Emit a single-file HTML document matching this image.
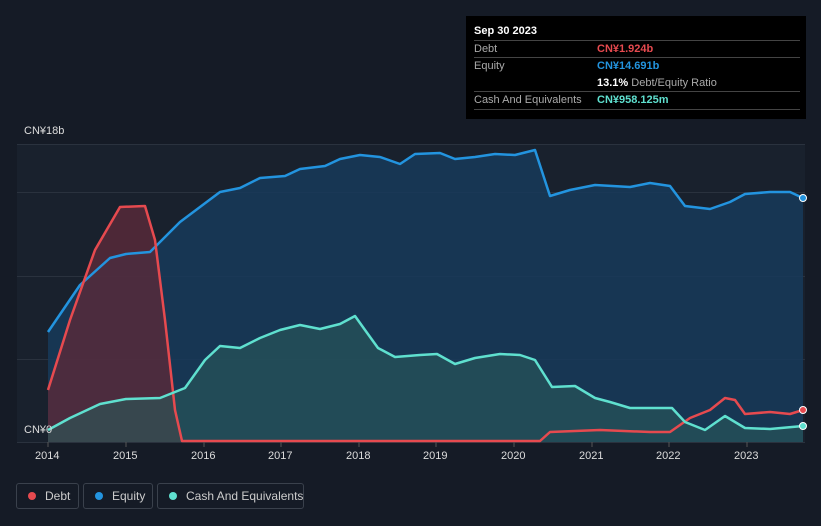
<!DOCTYPE html>
<html><head><meta charset="utf-8"><style>
body{margin:0;width:821px;height:526px;background:#151b26;font-family:"Liberation Sans",sans-serif;overflow:hidden;position:relative}
.tt{position:absolute;left:466px;top:16px;width:340px;height:103px;background:#000;color:#fff;font-size:11px}
.row{position:absolute;left:8px;width:326px;border-top:1px solid #444;height:17px;line-height:17px}
.lbl{color:#aaa;position:absolute;left:0}
.val{position:absolute;left:123px;font-weight:bold}
.leg{position:absolute;top:483px;height:26px;border:1px solid #3a414c;border-radius:3px;color:#ccc;font-size:12px;line-height:24px;box-sizing:border-box;white-space:nowrap}
.dot{display:inline-block;width:8px;height:8px;border-radius:50%;margin:0 9px 0 11px;vertical-align:0px}
.ax{position:absolute;top:450px;color:#ddd;font-size:11px}
</style></head><body>
<svg width="821" height="526" style="position:absolute;left:0;top:0">
<rect x="17" y="144" width="788" height="298" fill="#19212d"/>
<g stroke="#2a323e" stroke-width="1"><line x1="17" y1="144.5" x2="805" y2="144.5"/><line x1="17" y1="192.5" x2="805" y2="192.5"/><line x1="17" y1="276.5" x2="805" y2="276.5"/><line x1="17" y1="359.5" x2="805" y2="359.5"/><line x1="17" y1="442.5" x2="805" y2="442.5"/></g>
<polygon fill="#173a5a" fill-opacity="0.85" points="48,442 48,332 80,285 110,258 126,254 150,252 180,222 220,192 240,188 260,178 285,176 300,169 325,166 340,159 360,155 380,157 400,164 415,154 440,153 455,159 475,157 495,154 515,155 535,150 550,196 570,190 595,185 630,187 650,183 670,186 685,206 710,209 730,202 745,194 770,192 790,192 803,198 803,442"/>
<polygon fill="#5a2a3a" fill-opacity="0.8" points="48,442 48,390 70,320 95,250 120,207 145,206 155,240 165,320 175,410 182,440 182,442"/>
<polygon fill="#2a5a5a" fill-opacity="0.6" points="48,442 48,430 70,418 100,404 126,399 160,398 185,388 205,360 220,346 240,348 260,338 280,330 300,325 320,329 340,324 355,316 365,330 378,348 395,357 420,355 437,354 455,364 475,358 500,354 520,355 535,360 552,387 575,386 595,398 610,402 630,408 655,408 672,408 685,422 705,430 725,416 745,428 770,429 803,426 803,442"/>
<polyline fill="none" stroke="#2394df" stroke-width="2.5" stroke-linejoin="round" points="48,332 80,285 110,258 126,254 150,252 180,222 220,192 240,188 260,178 285,176 300,169 325,166 340,159 360,155 380,157 400,164 415,154 440,153 455,159 475,157 495,154 515,155 535,150 550,196 570,190 595,185 630,187 650,183 670,186 685,206 710,209 730,202 745,194 770,192 790,192 803,198"/>
<polyline fill="none" stroke="#e64a4f" stroke-width="2.5" stroke-linejoin="round" points="48,390 70,320 95,250 120,207 145,206 155,240 165,320 175,410 182,441 540,441 550,432 600,430 650,432 670,432 690,418 710,410 725,398 735,400 745,414 770,412 790,414 803,410"/>
<polyline fill="none" stroke="#5fe0cf" stroke-width="2.5" stroke-linejoin="round" points="48,430 70,418 100,404 126,399 160,398 185,388 205,360 220,346 240,348 260,338 280,330 300,325 320,329 340,324 355,316 365,330 378,348 395,357 420,355 437,354 455,364 475,358 500,354 520,355 535,360 552,387 575,386 595,398 610,402 630,408 655,408 672,408 685,422 705,430 725,416 745,428 770,429 803,426"/>
<circle cx="803" cy="198" r="3.5" fill="#2394df" stroke="#fff" stroke-width="1"/>
<circle cx="803" cy="410" r="3.5" fill="#e64a4f" stroke="#fff" stroke-width="1"/>
<circle cx="803" cy="426" r="3.5" fill="#5fe0cf" stroke="#fff" stroke-width="1"/>
<g stroke="#555"><line x1="48" y1="442" x2="48" y2="447"/><line x1="126" y1="442" x2="126" y2="447"/><line x1="204" y1="442" x2="204" y2="447"/><line x1="281" y1="442" x2="281" y2="447"/><line x1="359" y1="442" x2="359" y2="447"/><line x1="436" y1="442" x2="436" y2="447"/><line x1="514" y1="442" x2="514" y2="447"/><line x1="592" y1="442" x2="592" y2="447"/><line x1="669" y1="442" x2="669" y2="447"/><line x1="747" y1="442" x2="747" y2="447"/></g>
</svg>
<div style="position:absolute;left:24px;top:125px;color:#ddd;font-size:11px">CN¥18b</div>
<div style="position:absolute;left:24px;top:424px;color:#ddd;font-size:11px">CN¥0</div>
<div class="ax" style="left:35px">2014</div><div class="ax" style="left:113px">2015</div><div class="ax" style="left:191px">2016</div><div class="ax" style="left:268px">2017</div><div class="ax" style="left:346px">2018</div><div class="ax" style="left:423px">2019</div><div class="ax" style="left:501px">2020</div><div class="ax" style="left:579px">2021</div><div class="ax" style="left:656px">2022</div><div class="ax" style="left:734px">2023</div>
<div class="tt">
<div style="position:absolute;left:8px;top:9px;font-weight:bold">Sep 30 2023</div>
<div class="row" style="top:24px"><span class="lbl">Debt</span><span class="val" style="color:#e64a4f">CN¥1.924b</span></div>
<div class="row" style="top:41px"><span class="lbl">Equity</span><span class="val" style="color:#2394df">CN¥14.691b</span></div>
<div style="position:absolute;left:131px;top:59px;line-height:17px"><b>13.1%</b> <span style="color:#aaa">Debt/Equity Ratio</span></div>
<div class="row" style="top:75px"><span class="lbl">Cash And Equivalents</span><span class="val" style="color:#5fe0cf">CN¥958.125m</span></div>
<div class="row" style="top:93px;height:0"></div>
</div>
<div class="leg" style="left:16px;width:63px"><span class="dot" style="background:#e64a4f"></span>Debt</div>
<div class="leg" style="left:83px;width:70px"><span class="dot" style="background:#2394df"></span>Equity</div>
<div class="leg" style="left:157px;width:147px"><span class="dot" style="background:#5fe0cf"></span>Cash And Equivalents</div>
</body></html>
